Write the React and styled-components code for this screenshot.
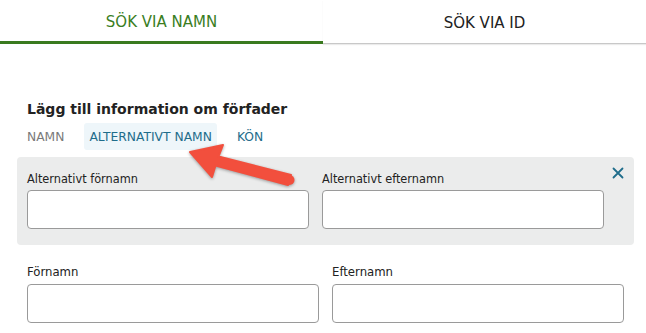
import React from "react"
import styled, { createGlobalStyle } from "styled-components"

const GlobalStyle = createGlobalStyle`
	html, body {
		margin: 0;
		padding: 0;
		background: #fff;
	}
	body {
		font-family: "DejaVu Sans", Verdana, sans-serif;
		color: #222;
	}
`

const Page = styled.div`
	position: relative;
	width: 646px;
	height: 333px;
	overflow: hidden;
`

const TabBar = styled.div`
	display: flex;
`

const Tab = styled.div`
	flex: 1;
	box-sizing: border-box;
	height: 44px;
	padding-top: 3px;
	display: flex;
	align-items: center;
	justify-content: center;
	font-size: 15px;
	color: ${props => props.active ? "#3b7e1f" : "#222"};
	border-bottom: ${props => props.active ? "3px solid #3a7a1f" : "1px solid #c8c8c8"};
	box-shadow: ${props => props.active ? "none" : "0 1px 1px rgba(0,0,0,0.08)"};
`

const Content = styled.div`
	padding: 56px 12px 0 17px;
`

const Heading = styled.h2`
	margin: 0 0 5px 10px;
	font-size: 14px;
	font-weight: bold;
	color: #222;
	line-height: 18px;
`

const SubTabs = styled.div`
	display: flex;
	gap: 15px;
	margin-left: 5px;
	margin-bottom: 7px;
`

const SubTab = styled.div`
	height: 27px;
	display: flex;
	align-items: center;
	padding: 0 5px;
	font-size: 12.3px;
	border-radius: 3px;
	color: ${props => props.muted ? "#7a7a7a" : "#1f6d8b"};
	background: ${props => props.active ? "#eef6fa" : "transparent"};
`

const Panel = styled.div`
	position: relative;
	display: flex;
	gap: 13px;
	padding: 13px 30px 16px 10px;
	background: #ebecec;
	border-radius: 4px;
`

const CloseButton = styled.div`
	position: absolute;
	top: 10px;
	right: 10px;
	width: 12px;
	height: 12px;
	display: flex;
	align-items: center;
	justify-content: center;
	cursor: pointer;
`

const Field = styled.div`
	flex: 1;
	display: flex;
	flex-direction: column;
`

const Label = styled.label`
	font-family: "DejaVu Sans Condensed", "DejaVu Sans", sans-serif;
	font-size: ${props => props.small ? "12.6px" : "13px"};
	line-height: 18px;
	color: #222;
	margin-bottom: ${props => props.small ? "2px" : "3px"};
`

const Input = styled.input`
	box-sizing: border-box;
	width: 100%;
	height: 39px;
	border: 1px solid #9a9a9a;
	border-radius: 4px;
	background: #fff;
	outline: none;
`

const Row = styled.div`
	display: flex;
	gap: 13px;
	padding: 18px 10px 0 10px;
`

const Arrow = styled.svg`
	position: absolute;
	left: 0;
	top: 0;
	pointer-events: none;
	filter: drop-shadow(0 1px 1.5px rgba(0,0,0,0.35));
`

export default function App() {
	return (
		<Page>
			<GlobalStyle />
			<TabBar>
				<Tab active>SÖK VIA NAMN</Tab>
				<Tab>SÖK VIA ID</Tab>
			</TabBar>
			<Content>
				<Heading>Lägg till information om förfader</Heading>
				<SubTabs>
					<SubTab muted>NAMN</SubTab>
					<SubTab active>ALTERNATIVT NAMN</SubTab>
					<SubTab>KÖN</SubTab>
				</SubTabs>
				<Panel>
					<Field>
						<Label small>Alternativt förnamn</Label>
						<Input type="text" />
					</Field>
					<Field>
						<Label small>Alternativt efternamn</Label>
						<Input type="text" />
					</Field>
					<CloseButton>
						<svg width="12" height="12" viewBox="0 0 12 12">
							<path d="M1.5 1.5 L10.5 10.5 M10.5 1.5 L1.5 10.5" stroke="#1f6d8b" strokeWidth="1.8" strokeLinecap="round" />
						</svg>
					</CloseButton>
				</Panel>
				<Row>
					<Field>
						<Label>Förnamn</Label>
						<Input type="text" />
					</Field>
					<Field>
						<Label>Efternamn</Label>
						<Input type="text" />
					</Field>
				</Row>
			</Content>
			<Arrow width="646" height="333" viewBox="0 0 646 333">
				<path
					d="M190 152 L223 145 L218.5 156.5 L291 175 L288 185 L215.5 165.5 L212 177 Z"
					fill="#f24f3d"
					stroke="#f24f3d"
					strokeWidth="2"
					strokeLinejoin="round"
				/>
				<circle cx="289.5" cy="180" r="5" fill="#f24f3d" />
			</Arrow>
		</Page>
	)
}
